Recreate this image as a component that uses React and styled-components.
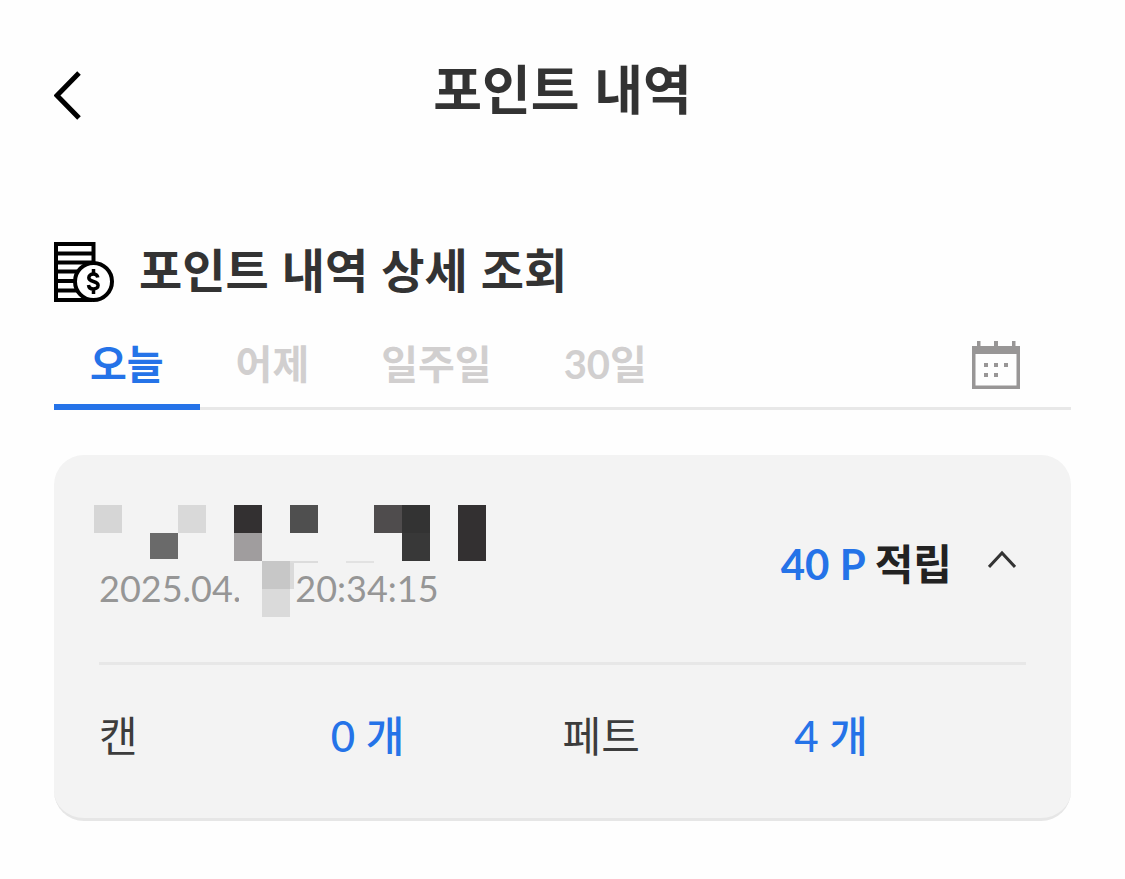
import React, { useState } from 'react';
import styled, { createGlobalStyle } from 'styled-components';

const GlobalStyle = createGlobalStyle`
  * {
    box-sizing: border-box;
  }

  body {
    margin: 0;
    background: #fefefe;
    color: #333333;
    font-family: Lato, 'Noto Sans CJK KR', sans-serif;
  }

  h1,
  h2 {
    font-family: 'Liberation Sans', 'Noto Sans CJK KR', sans-serif;
  }

  button {
    padding: 0;
    border: 0;
    background: none;
    color: inherit;
    font: inherit;
    cursor: pointer;
  }

  svg {
    display: block;
  }
`;

const Page = styled.div`
  padding: 50px 54px;
`;

const Header = styled.header`
  display: grid;
  grid-template-columns: 80px 1fr 80px;
  align-items: center;
  height: 84px;
`;

const BackButton = styled.button`
  padding-top: 6px;
  justify-self: start;
`;

const Title = styled.h1`
  margin: 0;
  font-size: 53px;
  line-height: 84px;
  font-weight: 700;
  text-align: center;
`;

const SectionTitle = styled.h2`
  display: flex;
  align-items: center;
  gap: 24px;
  margin: 104px 0 0;
  font-size: 47px;
  line-height: 68px;
  font-weight: 700;
`;

const TabBar = styled.div`
  display: flex;
  align-items: center;
  margin-top: 14px;
  height: 90px;
  box-shadow: inset 0 -3px #e8e8e8;
`;

const Tab = styled.button`
  height: 90px;
  padding: 4px 36px 0;
  border-bottom: 6px solid ${props => props.$active ? '#2573e8' : 'transparent'};
  color: ${props => props.$active ? '#2573e8' : '#d1cfcf'};
  font-size: 40px;
  line-height: 80px;
  font-weight: 700;
`;

const CalendarButton = styled.button`
  margin: 0 51px 0 auto;
`;

const Card = styled.section`
  margin-top: 45px;
  padding: 50px 45px;
  border-bottom: 3px solid #e6e6e6;
  border-radius: 30px;
  background: #f3f3f3;
`;

const CardHead = styled.div`
  display: flex;
  align-items: center;
  justify-content: space-between;
  height: 157px;
  padding-bottom: 40px;
`;

const Visit = styled.div`
  position: relative;
  align-self: stretch;
  display: flex;
  align-items: flex-end;
`;

const Mosaic = styled.svg`
  position: absolute;
  top: 0;
  left: -5px;
`;

const DateTime = styled.div`
  display: flex;
  gap: 54px;
  color: #969696;
  font-size: 36px;
  line-height: 68px;
`;

const Summary = styled.div`
  display: flex;
  align-items: center;
  gap: 36px;
  padding-right: 10px;
  color: #222222;
  font-size: 42px;
  line-height: 60px;
  font-weight: 700;
`;

const Point = styled.span`
  color: #2573e8;
`;

const Detail = styled.dl`
  display: grid;
  grid-template-columns: repeat(4, 1fr);
  margin: 0;
  padding-top: 39px;
  border-top: 3px solid #e7e7e7;
  font-size: 42px;
  line-height: 64px;
`;

const Name = styled.dt`
  color: #3c3c3c;
`;

const Count = styled.dd`
  margin: 0;
  color: #2573e8;
  font-weight: 500;
`;

const tabs = ['오늘', '어제', '일주일', '30일']

const counts = [
  { name: '캔', count: 0 },
  { name: '페트', count: 4 },
]

// x, y, width, height, color
const blocks = [
  [0, 0, 28, 28, '#d6d6d6'],
  [84, 0, 28, 28, '#d9d9d9'],
  [140, 0, 28, 28, '#333031'],
  [196, 0, 28, 28, '#4f4f4f'],
  [280, 0, 28, 28, '#4f4c4d'],
  [308, 0, 28, 28, '#333333'],
  [364, 0, 28, 56, '#333031'],
  [56, 28, 28, 26, '#6a6a6a'],
  [140, 28, 28, 28, '#a09d9e'],
  [308, 28, 28, 28, '#383838'],
  [145, 58, 23, 54, '#f3f3f3'],
  [168, 56, 28, 28, '#c7c7c7'],
  [168, 84, 28, 28, '#dadada'],
  [196, 56, 4, 28, '#dadada'],
  [196, 56, 28, 2, '#dcdcdc'],
  [252, 56, 28, 2, '#e2e2e2'],
]

const BackIcon = () => (
  <svg width="28" height="50" viewBox="0 0 28 50" fill="none" stroke="#000" strokeWidth="5">
    <path d="M25 3 L3 25.500 L25 48" />
  </svg>
)

const CoinIcon = () => (
  <svg width="61" height="60" viewBox="0 0 61 60" fill="none" stroke="#000" strokeWidth="4">
    <path d="M39.500 20V2H2v56h36M2 11.500h37M2 20.500h37M2 29.500h21M2 39h18M2 48.500h21" />
    <circle cx="39.500" cy="39.500" r="18.500" fill="#fff" />
    <path strokeWidth="3.500" d="M43.800 35.500c-.5-2.500-2.500-3.500-4.500-3.500-2.500 0-4.500 1.500-4.500 3.700 0 5 9.300 2.600 9.300 7.600 0 2.200-2 3.700-4.700 3.700s-4.600-1.500-4.900-4M39.500 27v5M39.500 47v5" />
  </svg>
)

const CalendarIcon = () => (
  <svg width="48" height="48" viewBox="0 0 48 48" fill="#989696">
    <path fillRule="evenodd" d="M0 5H48V48H0ZM3.500 13V44.500H44.500V13Z" />
    <path d="M5 0h3.500v6H5zM22 0h4v6h-4zM40 0h3.500v6H40z" />
    <path d="M12 22h4v4h-4zM22 22h4v4h-4zM32 22h4v4h-4zM12 32h4v4h-4zM22 32h4v4h-4z" />
  </svg>
)

const ArrowIcon = ({ open }) => (
  <svg width="28" height="28" viewBox="0 0 28 28" fill="none" stroke="#333" strokeWidth="3">
    <path d={open ? 'M1 17 L14 3 L27 17' : 'M1 3 L14 17 L27 3'} />
  </svg>
)

const App = () => {
  const [selected, setSelected] = useState(0)
  const [isOpen, setOpen] = useState(true)

  return (
    <Page>
      <GlobalStyle />
      <Header>
        <BackButton aria-label="뒤로"><BackIcon /></BackButton>
        <Title>포인트 내역</Title>
      </Header>
      <SectionTitle><CoinIcon />포인트 내역 상세 조회</SectionTitle>
      <TabBar>
        {tabs.map((e, i) =>
          <Tab key={e} $active={selected === i} onClick={() => setSelected(i)}>{e}</Tab>
        )}
        <CalendarButton aria-label="날짜 선택"><CalendarIcon /></CalendarButton>
      </TabBar>
      <Card>
        <CardHead>
          <Visit>
            <DateTime>
              <span>2025.04.</span>
              <span>20:34:15</span>
            </DateTime>
            <Mosaic width="392" height="112" shapeRendering="crispEdges" aria-hidden="true">
              {blocks.map(([x, y, w, h, color]) =>
                <rect key={`${x}-${y}-${w}`} x={x} y={y} width={w} height={h} fill={color} />
              )}
            </Mosaic>
          </Visit>
          <Summary>
            <span><Point>40 P</Point> 적립</span>
            <button aria-label="상세 보기" aria-expanded={isOpen} onClick={() => setOpen(!isOpen)}>
              <ArrowIcon open={isOpen} />
            </button>
          </Summary>
        </CardHead>
        {isOpen &&
          <Detail>
            {counts.map(e =>
              <React.Fragment key={e.name}>
                <Name>{e.name}</Name>
                <Count>{e.count} 개</Count>
              </React.Fragment>
            )}
          </Detail>
        }
      </Card>
    </Page>
  );
};

export default App;
